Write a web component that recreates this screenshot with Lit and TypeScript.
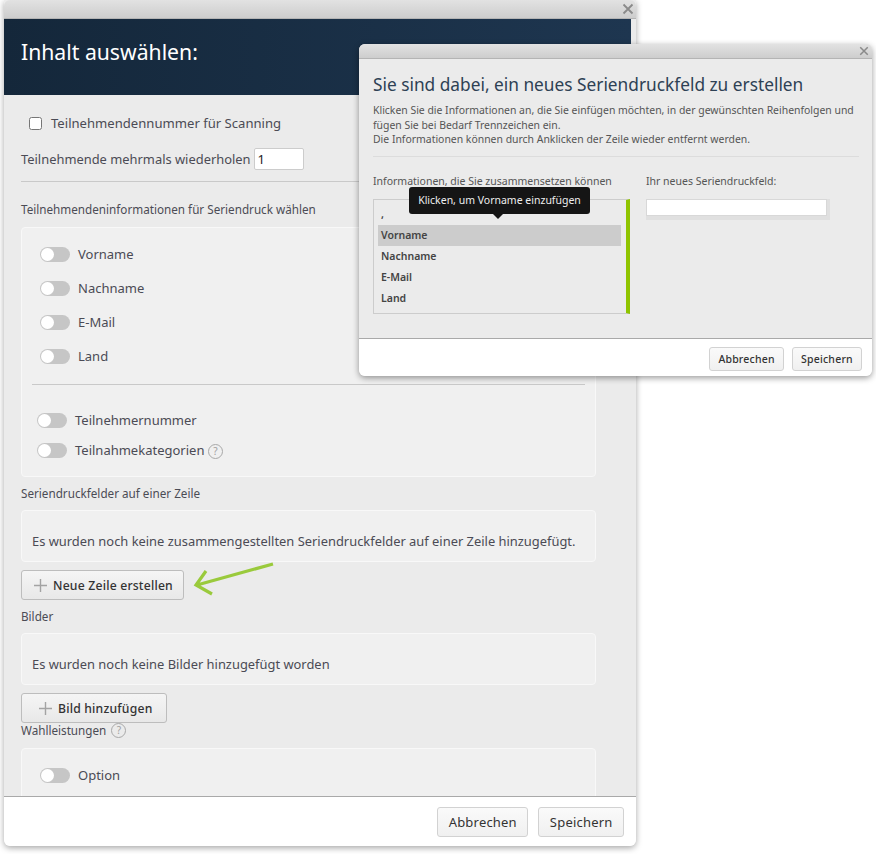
import { html, css, LitElement, svg } from 'lit';
import { customElement } from 'lit/decorators.js';

const closeIcon = (size: number) => html`<svg class="close" width=${size} height=${size} viewBox="0 0 12 12">
  <path d="M1.5 1.5l9 9M10.5 1.5l-9 9" stroke="#8a8a8a" stroke-width="1.8" fill="none" />
</svg>`;

const plusIcon = html`<svg class="plus" width="15" height="15" viewBox="0 0 15 15">
  <path d="M7.5 1v13M1 7.5h13" stroke="#a3a3a3" stroke-width="1.4" fill="none" />
</svg>`;

const helpIcon = html`<span class="help">?</span>`;

@customElement('app-root')
export class AppRoot extends LitElement {
  static styles = css`
    :host {
      display: block;
      position: relative;
      width: 876px;
      height: 854px;
      overflow: hidden;
      background: #fff;
      font-family: "Noto Sans", "Open Sans", sans-serif;
      color: #4b4b55;
    }

    .window {
      box-sizing: border-box;
      width: 632px;
      height: 846px;
      margin-left: 4px;
      display: flex;
      flex-direction: column;
      background: #ebebeb;
      border-radius: 0 0 6px 6px;
      box-shadow: 0 2px 6px rgba(0, 0, 0, 0.35);
    }

    .titlebar {
      flex: none;
      height: 18px;
      border-bottom: 1px solid #b4b4b4;
      background: linear-gradient(#e2e2e2, #cdcdcd);
      border-radius: 6px 6px 0 0;
      display: flex;
      justify-content: flex-end;
      align-items: center;
      padding-right: 2px;
    }

    .header {
      flex: none;
      box-sizing: border-box;
      width: 627px;
      height: 76px;
      padding: 18px 17px 0;
      background: linear-gradient(90deg, #14273a, #1e3650);
      color: #fff;
      font-size: 21.2px;
      line-height: 30px;
    }

    .body {
      flex: 1;
      min-height: 0;
      overflow: hidden;
      padding: 0 40px 0 17px;
      font-size: 12.9px;
    }

    .scan {
      display: flex;
      align-items: center;
      gap: 9px;
      height: 20px;
      margin: 18px 0 0 8px;
      font-size: 13.1px;
    }

    .scan input {
      width: 13px;
      height: 13px;
      margin: 0;
      flex: none;
    }

    .repeat {
      display: flex;
      align-items: center;
      gap: 3px;
      margin-top: 15px;
      height: 22px;
    }

    .repeat .num {
      box-sizing: border-box;
      width: 50px;
      height: 22px;
      padding: 2px 3px;
      background: #fff;
      border: 1px solid #ccc;
      border-radius: 2px;
      color: #222;
      font-size: 13px;
      line-height: 17px;
    }

    hr {
      border: 0;
      border-top: 1px solid #c9c9c9;
      margin: 0;
    }

    .repeat-rule {
      margin-top: 11px;
    }

    .label {
      height: 18px;
      line-height: 18px;
      font-size: 11.7px;
      display: flex;
      align-items: center;
      gap: 5px;
    }

    .label .help {
      margin-left: 0;
    }

    .panel {
      box-sizing: border-box;
      background: #f0f0f0;
      border: 1px solid #f8f8f8;
      border-radius: 4px;
    }

    .info-label {
      margin-top: 18px;
    }

    .info {
      height: 250px;
      margin-top: 9px;
      padding: 17px 10px 0;
    }

    .toggle-row {
      display: flex;
      align-items: center;
      gap: 8px;
      height: 18px;
      margin: 0 0 16px 8px;
      font-size: 13px;
    }

    .extra .toggle-row {
      margin: 0 0 12px 5px;
    }

    .toggle {
      flex: none;
      box-sizing: border-box;
      width: 30px;
      height: 15px;
      border-radius: 8px;
      background: #c6c6c6;
      display: flex;
      align-items: center;
    }

    .toggle i {
      display: block;
      width: 13px;
      height: 13px;
      margin-left: 1px;
      border-radius: 50%;
      background: #fff;
    }

    .info hr {
      margin: 19px 0 26px;
    }

    .help {
      display: inline-block;
      box-sizing: border-box;
      width: 15px;
      height: 15px;
      border: 1px solid #a8a8a8;
      border-radius: 50%;
      color: #a0a0a0;
      font-size: 10px;
      line-height: 13px;
      text-align: center;
    }

    .fields-label {
      margin-top: 7px;
    }

    .empty {
      height: 52px;
      margin-top: 8px;
      padding: 20px 10px 0;
      line-height: 20px;
    }

    .add {
      box-sizing: border-box;
      height: 30px;
      margin-top: 8px;
      align-items: center;
      gap: 5px;
      background: linear-gradient(#f5f5f5, #e8e8e8);
      border: 1px solid #bdbdbd;
      border-radius: 3px;
      color: #333;
      font-size: 12.2px;
      font-weight: 500;
      letter-spacing: 0.2px;
    }

    .add.line {
      width: 163px;
      padding-left: 11px;
      display: flex;
    }

    .add.image {
      width: 146px;
      padding-left: 16px;
      display: flex;
    }

    .images-label {
      margin-top: 7px;
    }

    .options-label {
      margin-top: -2px;
    }

    .options {
      height: 80px;
      margin-top: 9px;
      padding: 17px 10px 0;
    }

    .footer {
      flex: none;
      box-sizing: border-box;
      height: 50px;
      background: #fff;
      border-top: 1px solid #a9a9a9;
      border-radius: 0 0 6px 6px;
      display: flex;
      justify-content: flex-end;
      gap: 10px;
      padding: 10px 12px 0 0;
    }

    .btn {
      box-sizing: border-box;
      height: 30px;
      padding: 0 10.5px;
      background: linear-gradient(#fafafa, #f0f0f0);
      border: 1px solid #d2d2d2;
      border-radius: 3px;
      color: #333;
      font-size: 13px;
      line-height: 28px;
      letter-spacing: 0.2px;
    }

    .arrow {
      position: absolute;
      left: 190px;
      top: 558px;
    }

    .dialog {
      position: absolute;
      left: 359px;
      top: 44px;
      box-sizing: border-box;
      width: 513px;
      height: 332px;
      display: flex;
      flex-direction: column;
      border-radius: 6px;
      background: #ebebeb;
      box-shadow: 0 2px 6px rgba(0, 0, 0, 0.4);
    }

    .dialog .titlebar {
      height: 14px;
      padding-right: 3px;
    }

    .dialog-body {
      flex: 1;
      padding: 0 13px 0 14px;
      color: #555;
    }

    .dialog h2 {
      margin: 14px 0 0;
      font-size: 17.3px;
      font-weight: 400;
      line-height: 24px;
      color: #2e4154;
    }

    .dialog p {
      margin: 6px 0 0;
      font-size: 10.43px;
      line-height: 14.5px;
    }

    .dialog hr {
      margin-top: 9px;
      border-color: #dcdcdc;
    }

    .columns {
      display: flex;
      gap: 16px;
      margin-top: 16px;
    }

    .col-left {
      width: 257px;
    }

    .col-title {
      font-size: 10.5px;
      line-height: 16px;
    }

    .list {
      position: relative;
      box-sizing: border-box;
      height: 115px;
      margin-top: 10px;
      padding: 4px 5px 0 4px;
      border: 1px solid #ccc;
      border-right: 4px solid #8fc400;
      font-size: 10.5px;
      font-weight: 600;
      color: #444;
    }

    .list div {
      height: 21px;
      padding-left: 3px;
      line-height: 21px;
    }

    .list .active {
      background: #cccccc;
    }

    .tooltip {
      position: absolute;
      left: 35px;
      top: -13px;
      box-sizing: border-box;
      width: 181px;
      height: 27px;
      background: #151515;
      border-radius: 3px;
      color: #eee;
      font-size: 10.5px;
      font-weight: 400;
      line-height: 27px;
      text-align: center;
    }

    .tooltip::after {
      content: "";
      position: absolute;
      left: 84px;
      top: 27px;
      border: 5px solid transparent;
      border-top-color: #151515;
      border-bottom: 0;
    }

    .field {
      box-sizing: border-box;
      width: 184px;
      height: 21px;
      margin-top: 10px;
      padding: 0 3px 4px 0;
      background: #e0e0e0;
    }

    .field i {
      display: block;
      height: 17px;
      background: #fff;
      border: 1px solid #d8d8d8;
      box-sizing: border-box;
    }

    .dialog .footer {
      height: 38px;
      padding: 8px 10px 0 0;
      gap: 8px;
    }

    .dialog .btn {
      height: 24px;
      padding: 0 8.2px;
      font-size: 10.5px;
      font-weight: 500;
      line-height: 22px;
    }
  `;

  private toggle(label: unknown) {
    return html`<div class="toggle-row"><span class="toggle"><i></i></span><span>${label}</span></div>`;
  }

  render() {
    return html`
      <div class="window">
        <div class="titlebar">${closeIcon(12)}</div>
        <div class="header">Inhalt auswählen:</div>
        <div class="body">
          <label class="scan"><input type="checkbox" /><span>Teilnehmendennummer für Scanning</span></label>
          <div class="repeat"><span>Teilnehmende mehrmals wiederholen</span><span class="num">1</span></div>
          <hr class="repeat-rule" />
          <div class="label info-label">Teilnehmendeninformationen für Seriendruck wählen</div>
          <div class="panel info">
            ${['Vorname', 'Nachname', 'E-Mail', 'Land'].map(l => this.toggle(l))}
            <hr />
            <div class="extra">
              ${this.toggle('Teilnehmernummer')}
              ${this.toggle(html`Teilnahmekategorien ${helpIcon}`)}
            </div>
          </div>
          <div class="label fields-label">Seriendruckfelder auf einer Zeile</div>
          <div class="panel empty">Es wurden noch keine zusammengestellten Seriendruckfelder auf einer Zeile hinzugefügt.</div>
          <div class="add line">${plusIcon}<span>Neue Zeile erstellen</span></div>
          <div class="label images-label">Bilder</div>
          <div class="panel empty">Es wurden noch keine Bilder hinzugefügt worden</div>
          <div class="add image">${plusIcon}<span>Bild hinzufügen</span></div>
          <div class="label options-label">Wahlleistungen ${helpIcon}</div>
          <div class="panel options">${this.toggle('Option')}</div>
        </div>
        <div class="footer"><span class="btn">Abbrechen</span><span class="btn">Speichern</span></div>
      </div>

      <svg class="arrow" width="90" height="42" viewBox="0 0 90 42">
        ${svg`<path d="M83 6L7 27M16 13L6 27L22 36" stroke="#9aca3c" stroke-width="3.2" fill="none" />`}
      </svg>

      <div class="dialog">
        <div class="titlebar">${closeIcon(10)}</div>
        <div class="dialog-body">
          <h2>Sie sind dabei, ein neues Seriendruckfeld zu erstellen</h2>
          <p>Klicken Sie die Informationen an, die Sie einfügen möchten, in der gewünschten Reihenfolgen und<br />fügen Sie bei Bedarf Trennzeichen ein.<br />Die Informationen können durch Anklicken der Zeile wieder entfernt werden.</p>
          <hr />
          <div class="columns">
            <div class="col-left">
              <div class="col-title">Informationen, die Sie zusammensetzen können</div>
              <div class="list">
                <div>,</div>
                <div class="active">Vorname</div>
                <div>Nachname</div>
                <div>E-Mail</div>
                <div>Land</div>
                <span class="tooltip">Klicken, um Vorname einzufügen</span>
              </div>
            </div>
            <div>
              <div class="col-title">Ihr neues Seriendruckfeld:</div>
              <div class="field"><i></i></div>
            </div>
          </div>
        </div>
        <div class="footer"><span class="btn">Abbrechen</span><span class="btn">Speichern</span></div>
      </div>
    `;
  }
}
